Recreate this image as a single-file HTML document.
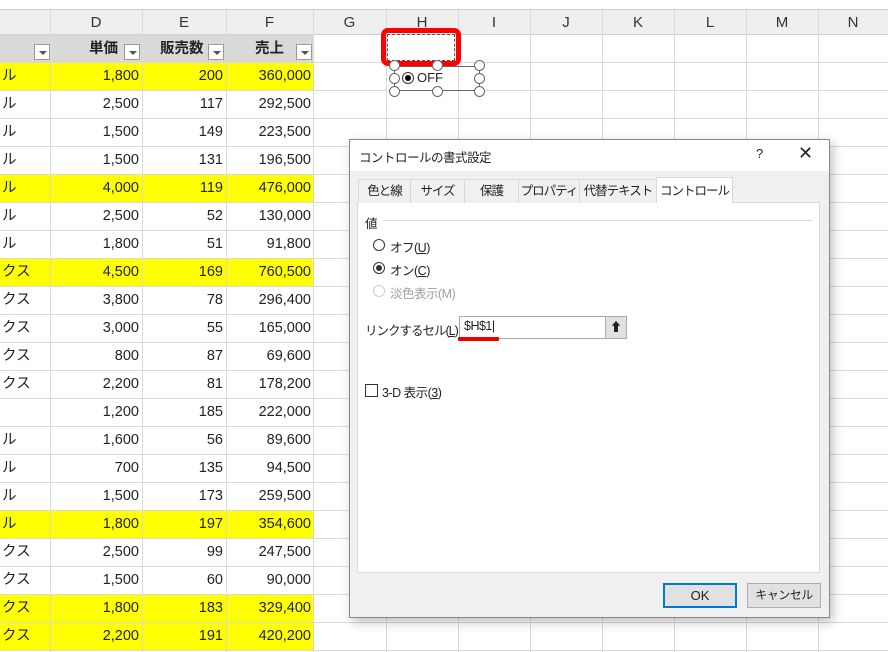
<!DOCTYPE html><html><head><meta charset="utf-8"><style>
*{margin:0;padding:0;box-sizing:border-box}
body{width:888px;height:652px;overflow:hidden;background:#fff;font-family:"Liberation Sans","Noto Sans CJK JP",sans-serif;position:relative;color:#222}
.a{position:absolute}
.hl{position:absolute;left:0;width:888px;height:1px;background:#dadada}
.vl{position:absolute;top:10px;height:642px;width:1px;background:#dadada}
.ch{position:absolute;top:10px;height:25px;font-size:15px;color:#333;text-align:center;line-height:25px}
.num{position:absolute;font-size:14.5px;text-align:right;line-height:28px;color:#222}
.dd{position:absolute;width:16px;height:16px;border:1px solid #999;background:#fff}
.dd:after{content:"";position:absolute;left:4px;top:6px;border-left:4px solid transparent;border-right:4px solid transparent;border-top:4px solid #555}
.hd{position:absolute;width:11px;height:11px;border:1.5px solid #666;border-radius:50%;background:#fff}
.tab{position:absolute;top:179px;height:24px;border:1px solid #d9d9d9;border-bottom:none;background:#f0f0f0;font-size:12.5px;line-height:22px;text-align:center;white-space:nowrap;letter-spacing:-1px;overflow:hidden}
.dl{font-size:12.5px;position:absolute;white-space:nowrap;letter-spacing:-0.5px}
</style></head><body>
<div class="a" style="left:0;top:0;width:888px;height:10px;background:#fff;border-bottom:1px solid #ccc"></div>
<div class="a" style="left:0;top:10px;width:888px;height:25px;background:#efefef;border-bottom:1px solid #cfcfcf"></div>
<div class="a" style="left:0;top:35px;width:313px;height:27px;background:#d9d9d9"></div>
<div class="a" style="left:0;top:62px;width:313px;height:28px;background:#ff0"></div>
<div class="a" style="left:0;top:174px;width:313px;height:28px;background:#ff0"></div>
<div class="a" style="left:0;top:258px;width:313px;height:28px;background:#ff0"></div>
<div class="a" style="left:0;top:510px;width:313px;height:28px;background:#ff0"></div>
<div class="a" style="left:0;top:594px;width:313px;height:56px;background:#ff0"></div>
<div id="grid"></div>
<div class="ch" style="left:50px;width:92px">D</div><div class="ch" style="left:142px;width:84px">E</div><div class="ch" style="left:226px;width:87px">F</div><div class="ch" style="left:313px;width:73px">G</div><div class="ch" style="left:386px;width:72px">H</div><div class="ch" style="left:458px;width:72px">I</div><div class="ch" style="left:530px;width:72px">J</div><div class="ch" style="left:602px;width:72px">K</div><div class="ch" style="left:674px;width:72px">L</div><div class="ch" style="left:746px;width:72px">M</div><div class="ch" style="left:818px;width:70px">N</div>
<div class="a" style="top:38px;font-weight:bold;font-size:14.5px;line-height:22px;left:80px;width:38px;text-align:right">単価</div>
<div class="a" style="left:160px;top:38px;font-weight:bold;font-size:14.5px;line-height:22px">販売数</div>
<div class="a" style="left:255px;top:38px;font-weight:bold;font-size:14.5px;line-height:22px">売上</div>
<div class="dd" style="left:34px;top:44px"></div><div class="dd" style="left:124px;top:44px"></div><div class="dd" style="left:208px;top:44px"></div><div class="dd" style="left:296px;top:44px"></div>
<div id="rows"></div>
<div class="a" style="left:381px;top:28px;width:80px;height:38px;border:5px solid #f00;border-radius:7px"></div>
<div class="a" style="left:387px;top:34px;width:68px;height:27px;border:1px dashed #555;border-bottom:1.5px dashed #555"></div>
<div class="a" style="left:394px;top:66px;width:86px;height:25px;border:1px solid #666"></div>
<div class="a" style="left:402px;top:72px;width:12px;height:12px;border:1px solid #333;border-radius:50%;background:#fff"></div>
<div class="a" style="left:405px;top:75px;width:6px;height:6px;border-radius:50%;background:#000"></div>
<div class="a" style="left:417px;top:70px;font-size:13px">OFF</div>
<div class="hd" style="left:389px;top:60px"></div><div class="hd" style="left:432px;top:60px"></div><div class="hd" style="left:474px;top:60px"></div>
<div class="hd" style="left:389px;top:73px"></div><div class="hd" style="left:474px;top:73px"></div>
<div class="hd" style="left:389px;top:86px"></div><div class="hd" style="left:432px;top:86px"></div><div class="hd" style="left:474px;top:86px"></div>
<div class="a" style="left:349px;top:139px;width:481px;height:479px;background:#f0f0f0;border:1px solid #888;box-shadow:3px 4px 10px rgba(0,0,0,.25)"></div>
<div class="a" style="left:350px;top:140px;width:479px;height:31px;background:#fff"></div>
<div class="dl" style="left:359px;top:147px">コントロールの書式設定</div>
<div class="dl" style="left:756px;top:146px;font-size:13px">?</div>
<div class="dl" style="left:798px;top:143px;font-size:18px;font-weight:300">✕</div>
<div class="a" style="left:357px;top:202px;width:463px;height:371px;background:#fff;border:1px solid #d9d9d9"></div>
<div class="tab" style="left:358px;width:53px">色と線</div>
<div class="tab" style="left:410px;width:55px">サイズ</div>
<div class="tab" style="left:464px;width:55px">保護</div>
<div class="tab" style="left:518px;width:62px">プロパティ</div>
<div class="tab" style="left:579px;width:78px">代替テキスト</div>
<div class="tab" style="left:656px;top:177px;height:26px;width:77px;background:#fff;line-height:26px">コントロール</div>
<div class="dl" style="left:365px;top:213px">値</div>
<div class="a" style="left:383px;top:220px;width:430px;height:1px;background:#ddd"></div>
<div class="a" style="left:373px;top:239px;width:12px;height:12px;border:1px solid #333;border-radius:50%;background:#fff"></div>
<div class="dl" style="left:390px;top:237px">オフ(<u>U</u>)</div>
<div class="a" style="left:373px;top:262px;width:12px;height:12px;border:1px solid #333;border-radius:50%;background:#fff"></div>
<div class="a" style="left:376px;top:265px;width:6px;height:6px;border-radius:50%;background:#333"></div>
<div class="dl" style="left:390px;top:260px">オン(<u>C</u>)</div>
<div class="a" style="left:373px;top:285px;width:12px;height:12px;border:1px solid #ccc;border-radius:50%;background:#fff"></div>
<div class="dl" style="left:390px;top:283px;color:#a0a0a0">淡色表示(M)</div>
<div class="dl" style="left:365px;top:320px;letter-spacing:-1px">リンクするセル(<u>L</u>):</div>
<div class="a" style="left:459px;top:316px;width:168px;height:23px;border:1px solid #aaa;background:#fff"></div>
<div class="dl" style="left:464px;top:319px">$H$1|</div>
<div class="a" style="left:605px;top:317px;width:21px;height:21px;background:#e1e1e1;border-left:1px solid #aaa;font-size:12px;text-align:center;line-height:20px;font-weight:bold">⬆</div>
<div class="a" style="left:458px;top:337px;width:41px;height:4px;background:#e00;border-radius:1px"></div>
<div class="a" style="left:365px;top:384px;width:13px;height:13px;border:1px solid #333;background:#fff"></div>
<div class="dl" style="left:382px;top:382px">3-D 表示(<u>3</u>)</div>
<div class="a" style="left:663px;top:583px;width:74px;height:25px;border:2px solid #0078d7;background:#e1e1e1;font-size:13px;text-align:center;line-height:21px">OK</div>
<div class="a" style="left:747px;top:583px;width:74px;height:25px;border:1px solid #adadad;background:#e1e1e1;font-size:12px;letter-spacing:-0.5px;text-align:center;line-height:23px">キャンセル</div>
<script>
var g=document.getElementById('grid'),h='';
for(var y=62;y<652;y+=28)h+='<div class="hl" style="top:'+y+'px"></div>';
[50,142,226,313,386,458,530,602,674,746,818].forEach(function(x){h+='<div class="vl" style="left:'+x+'px"></div>'});
g.innerHTML=h;
var d=[["ル",1800,200,360000],["ル",2500,117,292500],["ル",1500,149,223500],["ル",1500,131,196500],["ル",4000,119,476000],["ル",2500,52,130000],["ル",1800,51,91800],["クス",4500,169,760500],["クス",3800,78,296400],["クス",3000,55,165000],["クス",800,87,69600],["クス",2200,81,178200],["",1200,185,222000],["ル",1600,56,89600],["ル",700,135,94500],["ル",1500,173,259500],["ル",1800,197,354600],["クス",2500,99,247500],["クス",1500,60,90000],["クス",1800,183,329400],["クス",2200,191,420200]];
var r='';
d.forEach(function(e,i){var t=62+28*i;
r+='<div class="num" style="left:2px;top:'+t+'px;text-align:left">'+e[0]+'</div>';
r+='<div class="num" style="left:50px;width:89px;top:'+t+'px">'+e[1].toLocaleString('en-US')+'</div>';
r+='<div class="num" style="left:142px;width:81px;top:'+t+'px">'+e[2]+'</div>';
r+='<div class="num" style="left:226px;width:85px;top:'+t+'px">'+e[3].toLocaleString('en-US')+'</div>';});
document.getElementById('rows').innerHTML=r;
</script>
</body></html>
